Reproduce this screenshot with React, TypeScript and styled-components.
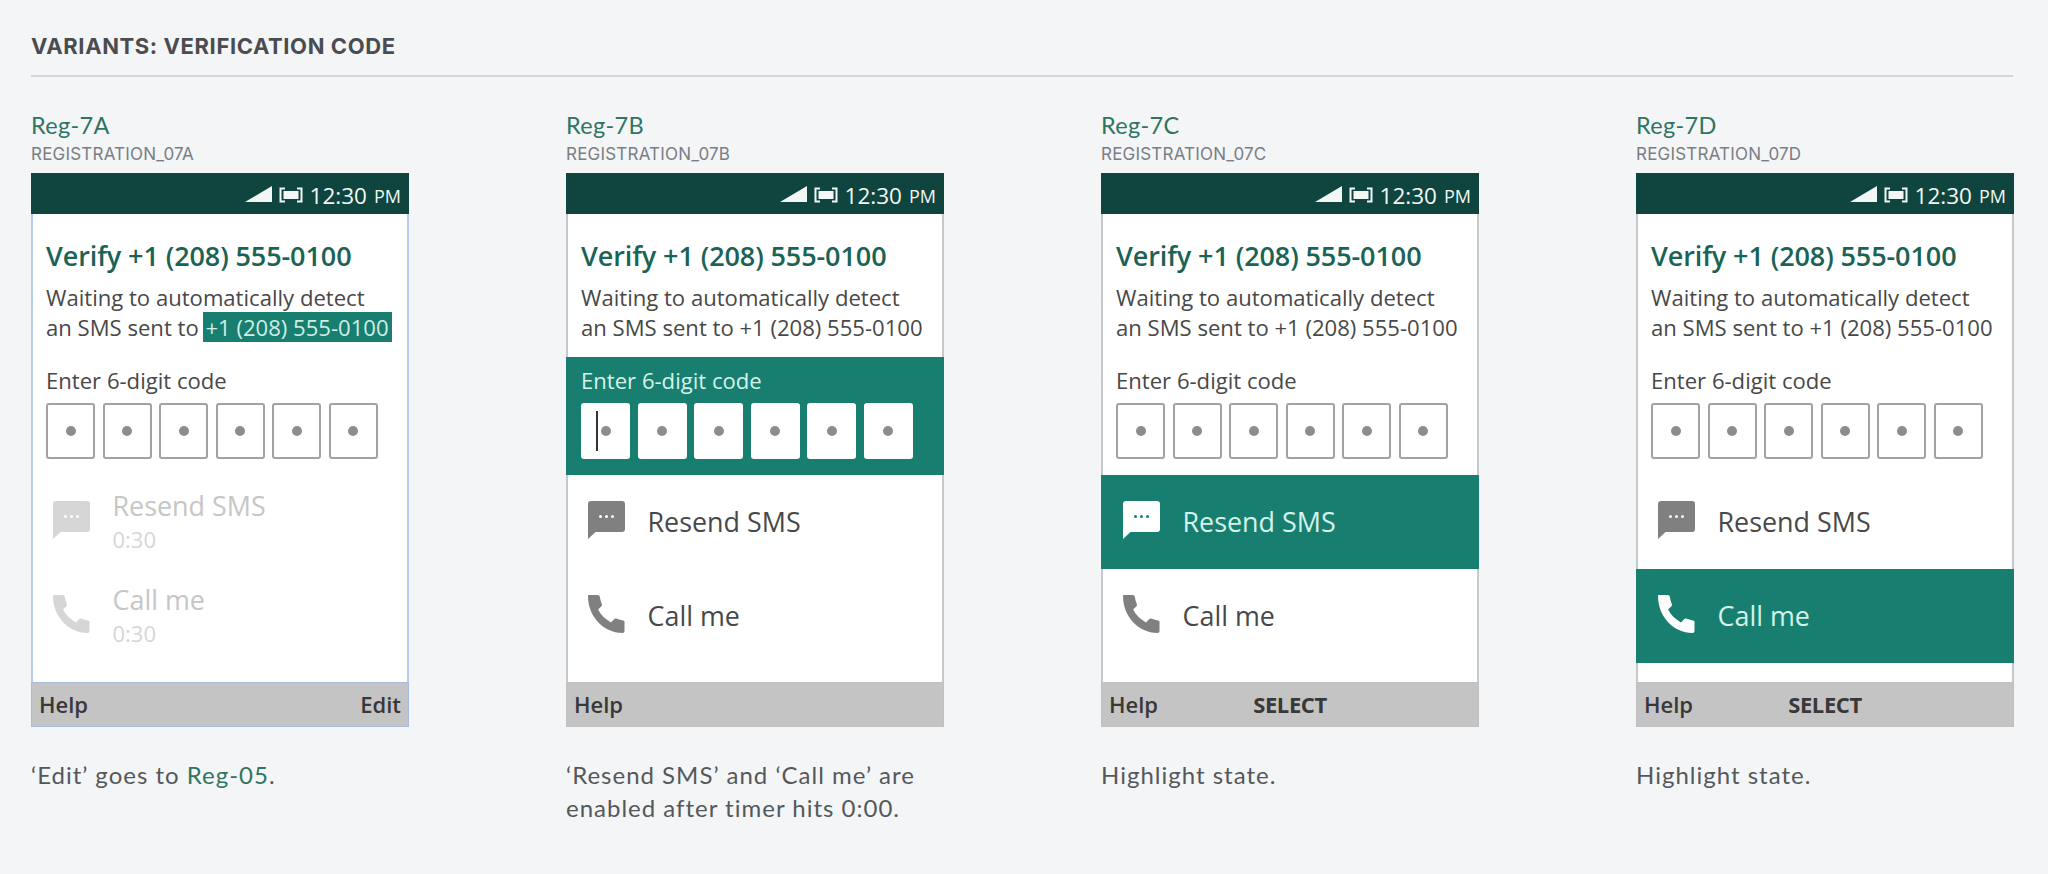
import React from "react";
import styled, { createGlobalStyle } from "styled-components";

const Global = createGlobalStyle`
  html, body { margin: 0; padding: 0; background: #f3f5f7; }
  * { box-sizing: border-box; }
`;

const Page = styled.div`
  width: 2048px;
  height: 874px;
  overflow: hidden;
  padding: 31px 35px 0 31px;
  background: #f3f5f7;
`;
const SectionHeader = styled.h2`
  margin: 0;
  height: 46px;
  border-bottom: 2px solid #d3d5d7;
  font: 700 22px/30px Inter, "Liberation Sans", sans-serif;
  letter-spacing: 0.6px;
  color: #4a4c50;
`;
const Columns = styled.div`
  display: grid;
  grid-template-columns: repeat(4, 378px);
  column-gap: 157px;
  padding-top: 33px;
`;
const Column = styled.section`
  display: flex;
  flex-direction: column;
`;
const RegName = styled.div`
  font: 400 23.5px/31px Lato, "Open Sans", sans-serif;
  color: #2f7562;
  letter-spacing: 0.3px;
`;
const RegId = styled.div`
  font: 400 17px/26px Inter, "Liberation Sans", sans-serif;
  color: #7a7e84;
  margin-bottom: 6px;
  letter-spacing: 0.2px;
`;
const Screen = styled.div<{ $edge: string }>`
  width: 378px;
  height: 554px;
  display: flex;
  flex-direction: column;
  background: #fff;
  box-shadow: inset 0 0 0 2px ${(p) => p.$edge};
`;
const StatusBar = styled.div`
  height: 41px;
  flex: none;
  display: flex;
  align-items: center;
  justify-content: flex-end;
  padding: 4px 8px 0 0;
  background: #0f453e;
  color: #f2f7f6;
  font: 400 22.5px/37px "Open Sans", sans-serif;
`;
const Signal = styled.svg`
  width: 27px;
  height: 16px;
  margin-right: 7px;
  margin-top: -3px;
`;
const Battery = styled.svg`
  width: 24px;
  height: 16px;
  margin-right: 7px;
  margin-top: -1px;
`;
const Meridiem = styled.span`
  font-size: 18px;
  margin-left: 7px;
  margin-top: 2px;
`;
const Intro = styled.div`
  padding: 26px 15px 0;
  height: 143px;
  flex: none;
`;
const Title = styled.h3`
  margin: 0 0 10px;
  font: 600 27px/32px "Open Sans", sans-serif;
  letter-spacing: -0.1px;
  color: #1a6355;
`;
const Copy = styled.div`
  font: 400 22.1px/30px "Open Sans", sans-serif;
  color: #484848;
  white-space: nowrap;
`;
const PhoneMark = styled.span`
  display: inline-block;
  background: #187f70;
  color: #cfeee6;
  padding: 0 3px 0 2px;
  margin-left: -1px;
`;
const CodeSection = styled.div<{ $active: boolean }>`
  height: 118px;
  flex: none;
  padding: 8px 15px 0;
  background: ${(p) => (p.$active ? "#187f70" : "transparent")};
`;
const CodeLabel = styled.div<{ $active: boolean }>`
  font: 400 22.1px/30px "Open Sans", sans-serif;
  color: ${(p) => (p.$active ? "#d4f3ea" : "#484848")};
  margin-bottom: 8px;
`;
const Boxes = styled.div`
  display: flex;
  gap: 7.6px;
`;
const DigitBox = styled.div<{ $active: boolean }>`
  position: relative;
  width: 49px;
  height: 56px;
  display: flex;
  align-items: center;
  justify-content: center;
  border-radius: 3px;
  background: #fff;
  border: ${(p) => (p.$active ? "none" : "2px solid #a2a2a2")};
`;
const Dot = styled.span`
  width: 10px;
  height: 10px;
  border-radius: 50%;
  background: #8d8d8d;
`;
const Caret = styled.span`
  position: absolute;
  left: 15px;
  top: 8px;
  width: 2px;
  height: 40px;
  background: #333;
`;
const ActionRow = styled.div<{ $active: boolean }>`
  height: 94px;
  flex: none;
  display: flex;
  align-items: center;
  padding-left: 22px;
  background: ${(p) => (p.$active ? "#187f70" : "transparent")};
`;
const ActionIcon = styled.svg<{ $tone: string }>`
  width: 37px;
  height: 38px;
  flex: none;
  margin-right: 22.5px;
  margin-top: -4px;
  fill: ${(p) => p.$tone};
`;
const ActionText = styled.div`
  display: flex;
  flex-direction: column;
`;
const ActionLabel = styled.div<{ $tone: string }>`
  font: 400 26.9px/34px "Open Sans", sans-serif;
  color: ${(p) => p.$tone};
`;
const Timer = styled.div`
  font: 400 22px/32px "Open Sans", sans-serif;
  color: #d6d6d6;
`;
const Footer = styled.div<{ $edge: string }>`
  margin-top: auto;
  height: 45px;
  flex: none;
  display: grid;
  grid-template-columns: 1fr auto 1fr;
  align-items: center;
  padding: 0 8px;
  background: #c4c4c4;
  box-shadow: inset 0 0 0 1px ${(p) => p.$edge};
  font: 600 22px/45px "Open Sans", sans-serif;
  color: #383838;
`;
const FooterMid = styled.span`
  font-weight: 700;
  letter-spacing: -0.4px;
`;
const FooterEnd = styled.span`
  justify-self: end;
`;
const Note = styled.p`
  margin: 31px 0 0;
  font: 400 24px/33px Lato, "Open Sans", sans-serif;
  letter-spacing: 1px;
  color: #55585b;
`;
const NoteLink = styled.span`
  color: #2f7562;
`;

const ChatIcon = ({ tone, dots }: { tone: string; dots: string }) => (
  <ActionIcon $tone={tone} viewBox="0 0 37 38">
    <path d="M3 0h31a3 3 0 0 1 3 3v25a3 3 0 0 1-3 3H7.5L0 38V3a3 3 0 0 1 3-3z" />
    <g fill={dots}>
      <circle cx="12.5" cy="15.5" r="1.5" />
      <circle cx="18.5" cy="15.5" r="1.5" />
      <circle cx="24.5" cy="15.5" r="1.5" />
    </g>
  </ActionIcon>
);

const CallIcon = ({ tone }: { tone: string }) => (
  <ActionIcon $tone={tone} viewBox="0 0 37 38">
    <path d="M1 0h8.5c1.3 0 2.2.7 2.4 2 .3 2.6.9 4.8 1.8 6.7.5 1.1.3 2-.5 2.8l-3.1 3.1c2.9 5.6 7.3 9.9 12.9 12.8l3.1-3.1c.8-.8 1.7-1 2.8-.5 2 .8 4 1.3 6.2 1.6.9.1 1.4.7 1.4 1.6V36c0 1.2-.8 2-2 2C15.5 38 0 21.5 0 1c0-.6.4-1 1-1z" />
  </ActionIcon>
);

type Variant = {
  name: string;
  id: string;
  edge: string;
  footerEdge: string;
  phoneMark?: boolean;
  focus?: "code" | "sms" | "call";
  disabled?: boolean;
  footerEnd?: string;
  footerMid?: string;
  note: React.ReactNode;
};

const variants: Variant[] = [
  {
    name: "Reg-7A",
    id: "REGISTRATION_07A",
    edge: "#b9cbee",
    footerEdge: "#a9bbdc",
    phoneMark: true,
    disabled: true,
    footerEnd: "Edit",
    note: (
      <>
        ‘Edit’ goes to <NoteLink>Reg-05</NoteLink>.
      </>
    ),
  },
  {
    name: "Reg-7B",
    id: "REGISTRATION_07B",
    edge: "#c6c9cc",
    footerEdge: "#c0c0c0",
    focus: "code",
    note: (
      <>
        ‘Resend SMS’ and ‘Call me’ are
        <br />
        enabled after timer hits 0:00.
      </>
    ),
  },
  {
    name: "Reg-7C",
    id: "REGISTRATION_07C",
    edge: "#c6c9cc",
    footerEdge: "#c0c0c0",
    focus: "sms",
    footerMid: "SELECT",
    note: "Highlight state.",
  },
  {
    name: "Reg-7D",
    id: "REGISTRATION_07D",
    edge: "#c6c9cc",
    footerEdge: "#c0c0c0",
    focus: "call",
    footerMid: "SELECT",
    note: "Highlight state.",
  },
];

const Action = ({
  kind,
  label,
  variant,
}: {
  kind: "sms" | "call";
  label: string;
  variant: Variant;
}) => {
  const active = variant.focus === kind;
  const iconTone = active ? "#ffffff" : variant.disabled ? "#d6d6d6" : "#808080";
  const textTone = active ? "#d4f3ea" : variant.disabled ? "#c6c6c6" : "#484848";
  const dots = active ? "#187f70" : "#ffffff";
  return (
    <ActionRow $active={active}>
      {kind === "sms" ? <ChatIcon tone={iconTone} dots={dots} /> : <CallIcon tone={iconTone} />}
      <ActionText>
        <ActionLabel $tone={textTone}>{label}</ActionLabel>
        {variant.disabled && <Timer>0:30</Timer>}
      </ActionText>
    </ActionRow>
  );
};

const Phone = ({ variant }: { variant: Variant }) => {
  const codeActive = variant.focus === "code";
  return (
    <Screen $edge={variant.edge}>
      <StatusBar>
        <Signal viewBox="0 0 27 16">
          <path d="M27 0v16H0z" fill="#f2f7f6" />
        </Signal>
        <Battery viewBox="0 0 24 16">
          <path d="M6 1.5H1.5v13H6M18 1.5h4.5v13H18" fill="none" stroke="#f2f7f6" strokeWidth="2" />
          <rect x="4.5" y="4" width="15" height="8" fill="#f2f7f6" />
        </Battery>
        12:30<Meridiem>PM</Meridiem>
      </StatusBar>
      <Intro>
        <Title>Verify +1 (208) 555-0100</Title>
        <Copy>
          Waiting to automatically detect
          <br />
          an SMS sent to{" "}
          {variant.phoneMark ? <PhoneMark>+1 (208) 555-0100</PhoneMark> : "+1 (208) 555-0100"}
        </Copy>
      </Intro>
      <CodeSection $active={codeActive}>
        <CodeLabel $active={codeActive}>Enter 6-digit code</CodeLabel>
        <Boxes>
          {[0, 1, 2, 3, 4, 5].map((i) => (
            <DigitBox key={i} $active={codeActive}>
              {codeActive && i === 0 && <Caret />}
              <Dot />
            </DigitBox>
          ))}
        </Boxes>
      </CodeSection>
      <Action kind="sms" label="Resend SMS" variant={variant} />
      <Action kind="call" label="Call me" variant={variant} />
      <Footer $edge={variant.footerEdge}>
        <span>Help</span>
        <FooterMid>{variant.footerMid}</FooterMid>
        <FooterEnd>{variant.footerEnd}</FooterEnd>
      </Footer>
    </Screen>
  );
};

export default function App() {
  return (
    <>
      <Global />
      <Page>
        <SectionHeader>VARIANTS: VERIFICATION CODE</SectionHeader>
        <Columns>
          {variants.map((v) => (
            <Column key={v.id}>
              <RegName>{v.name}</RegName>
              <RegId>{v.id}</RegId>
              <Phone variant={v} />
              <Note>{v.note}</Note>
            </Column>
          ))}
        </Columns>
      </Page>
    </>
  );
}
